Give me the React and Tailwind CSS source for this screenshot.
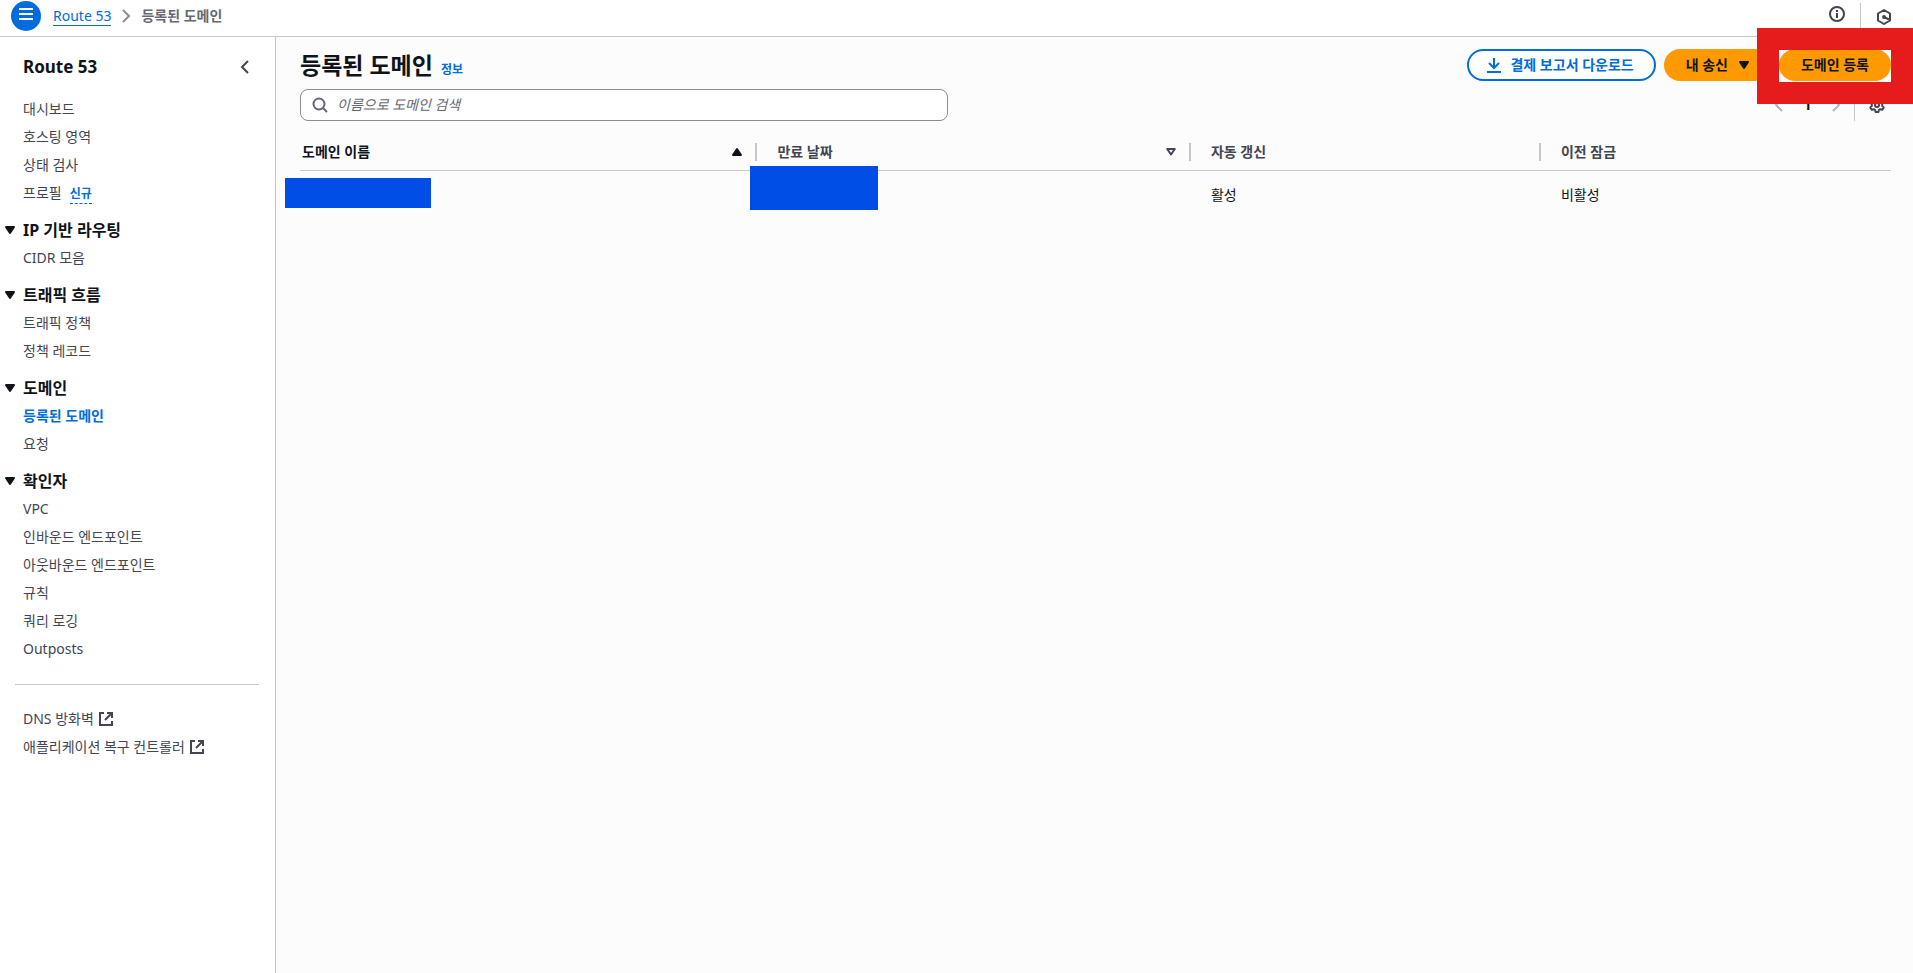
const groups = [
  {
    items: [
      { label: "대시보드" },
      { label: "호스팅 영역" },
      { label: "상태 검사" },
      { label: "프로필", badge: "신규" },
    ],
  },
  { title: "IP 기반 라우팅", items: [{ label: "CIDR 모음" }] },
  {
    title: "트래픽 흐름",
    items: [{ label: "트래픽 정책" }, { label: "정책 레코드" }],
  },
  {
    title: "도메인",
    items: [{ label: "등록된 도메인", active: true }, { label: "요청" }],
  },
  {
    title: "확인자",
    items: [
      { label: "VPC" },
      { label: "인바운드 엔드포인트" },
      { label: "아웃바운드 엔드포인트" },
      { label: "규칙" },
      { label: "쿼리 로깅" },
      { label: "Outposts" },
    ],
  },
];

const externalLinks = ["DNS 방화벽", "애플리케이션 복구 컨트롤러"];

function Icon({ children, className = "" }) {
  return (
    <svg
      viewBox="0 0 16 16"
      fill="none"
      stroke="currentColor"
      strokeWidth="2"
      aria-hidden="true"
      className={`size-4 shrink-0 ${className}`}
    >
      {children}
    </svg>
  );
}

function Caret({ up, outline }) {
  return (
    <Icon>
      {outline ? (
        <path d="M4.200 5h7.600L8 10.500z" strokeLinejoin="round" />
      ) : (
        <path
          d={up ? "M4 11h8L8 5z" : "M4 5h8l-4 6z"}
          fill="currentColor"
          strokeLinejoin="round"
        />
      )}
    </Icon>
  );
}

function Header() {
  return (
    <header className="flex h-[37px] items-start justify-between border-b border-[#c6c6cd] bg-white pr-[21px] pl-[11px]">
      <div className="flex items-center pt-px">
        <button
          type="button"
          aria-label="메뉴"
          className="flex size-[30px] items-center justify-center rounded-full bg-[#006ce0] pb-1 text-white"
        >
          <svg viewBox="0 0 14 12" className="h-3 w-3.5" stroke="currentColor" strokeWidth="2">
            <path d="M0 1h14M0 6h14M0 11h14" />
          </svg>
        </button>
        <nav aria-label="이동 경로" className="flex items-center pl-3">
          <a href="#" className="border-b border-[#006ce0] leading-[18px] text-[#006ce0]">
            Route 53
          </a>
          <Icon className="mx-[7px] text-[#8c8c94]">
            <path d="M5 2l6 6-6 6" />
          </Icon>
          <span className="font-bold text-[#656871]">등록된 도메인</span>
        </nav>
      </div>
      <div className="flex h-9 items-start text-[#424650]">
        <button type="button" aria-label="도움말" className="mt-1.5">
          <Icon>
            <circle cx="8" cy="8" r="7" />
            <path d="M8 7v5M8 4v2" />
          </Icon>
        </button>
        <span className="mt-[3px] mr-[15px] ml-[15px] h-8 w-px bg-[#c6c6cd]" />
        <button type="button" aria-label="Amazon Q" className="mt-[9px]">
          <Icon>
            <path d="M8 1l6 3.500v7L8 15l-6-3.500v-7z" strokeLinejoin="round" />
            <path d="M8 8l5 2.500" />
            <circle cx="8" cy="8" r="1" fill="currentColor" />
          </Icon>
        </button>
      </div>
    </header>
  );
}

function Sidebar() {
  return (
    <aside className="w-[276px] shrink-0 border-r border-[#c6c6cd] bg-white text-[#424650]">
      <div className="flex items-center justify-between pt-[18px] pr-[22px] pl-[23px]">
        <h2 className="text-[17px] leading-6 font-bold text-[#0f141a]">Route 53</h2>
        <button type="button" aria-label="탐색 닫기">
          <Icon>
            <path d="M11 2L5 8l6 6" />
          </Icon>
        </button>
      </div>
      <nav aria-label="Route 53" className="pt-4">
        {groups.map((group, i) => (
          <section key={i}>
            {group.title && (
              <h3 className="mt-[11px] mb-0.5">
                <button
                  type="button"
                  className="flex items-center gap-[5px] pl-0.5 text-base leading-6 font-bold text-[#0f141a]"
                >
                  <Caret />
                  {group.title}
                </button>
              </h3>
            )}
            <ul className="pl-[23px]">
              {group.items.map((item) => (
                <li key={item.label} className="flex h-7 items-center gap-2">
                  <a href="#" className={item.active ? "font-bold text-[#006ce0]" : ""}>
                    {item.label}
                  </a>
                  {item.badge && (
                    <button
                      type="button"
                      className="mt-0.5 border-b border-dashed border-[#006ce0] text-xs leading-[18px] font-bold text-[#006ce0]"
                    >
                      {item.badge}
                    </button>
                  )}
                </li>
              ))}
            </ul>
          </section>
        ))}
        <hr className="mt-[21px] mr-4 mb-5 ml-[15px] border-[#c6c6cd]" />
        <ul className="pl-[23px]">
          {externalLinks.map((label) => (
            <li key={label} className="flex h-7 items-center">
              <a href="#" className="flex items-center gap-1">
                {label}
                <Icon>
                  <path d="M6 2H2v12h12v-4" />
                  <path d="M9 2h5v5M14 2L7 9" />
                </Icon>
              </a>
            </li>
          ))}
        </ul>
      </nav>
    </aside>
  );
}

function PageHeader() {
  return (
    <div className="flex items-center justify-between">
      <div className="flex items-baseline gap-2">
        <h1 className="text-[23px] leading-[30px] font-bold">등록된 도메인</h1>
        <a href="#" className="text-xs font-bold text-[#006ce0]">
          정보
        </a>
      </div>
      <div className="flex gap-2 font-bold">
        <button
          type="button"
          className="flex h-8 items-center gap-2 rounded-full border-2 border-[#006ce0] bg-white pr-5 pl-[17px] text-[#006ce0]"
        >
          <Icon>
            <path d="M1 15h14M8 1v10M3 6l5 5 5-5" />
          </Icon>
          결제 보고서 다운로드
        </button>
        <button
          type="button"
          className="flex h-8 items-center gap-2 rounded-full bg-[#ff9900] pr-[19px] pl-[22px]"
        >
          내 송신
          <Caret />
        </button>
        <div className="relative z-10 bg-white">
          <button type="button" className="block h-8 rounded-full bg-[#ff9900] px-[22px]">
            도메인 등록
          </button>
          <span className="pointer-events-none absolute -inset-x-[22px] -top-[21px] -bottom-[23px] border-[22px] border-[#e61c1c]" />
        </div>
      </div>
    </div>
  );
}

function Toolbar() {
  return (
    <div className="mt-2 flex items-center justify-between">
      <label className="flex h-8 w-[40.7%] items-center gap-[9px] rounded-lg border border-[#8c8c94] bg-white px-[11px]">
        <Icon className="text-[#656871]">
          <circle cx="7" cy="7" r="5.5" />
          <path d="M11 11l4 4" />
        </Icon>
        <input
          type="search"
          aria-label="이름으로 도메인 검색"
          placeholder="이름으로 도메인 검색"
          className="w-full bg-transparent outline-none placeholder:text-[#656871] placeholder:italic"
        />
      </label>
      <div className="flex items-center">
        <button type="button" aria-label="이전 페이지" className="text-[#b4b4bb]">
          <Icon>
            <path d="M11 2L5 8l6 6" />
          </Icon>
        </button>
        <button type="button" className="w-[41px] font-bold">
          1
        </button>
        <button type="button" aria-label="다음 페이지" className="text-[#b4b4bb]">
          <Icon>
            <path d="M5 2l6 6-6 6" />
          </Icon>
        </button>
        <span className="mr-[14px] ml-2.5 h-8 w-px bg-[#c6c6cd]" />
        <button type="button" aria-label="설정" className="mr-1.5 text-[#424650]">
          <Icon>
            <path
              d="M6.6 1h2.8l.5 2 1.4.8 2-.6 1.4 2.4-1.500 1.500v1.800l1.500 1.500-1.400 2.400-2-.6-1.400.8-.5 2H6.600l-.5-2-1.400-.8-2 .6-1.400-2.400L2.800 8.900V7.100L1.300 5.600l1.400-2.400 2 .6L6.100 3z"
              strokeLinejoin="round"
            />
            <circle cx="8" cy="8" r="2" />
          </Icon>
        </button>
      </div>
    </div>
  );
}

function HeadCell({ label, sort, first, last }) {
  return (
    <th scope="col" className="border-b border-[#c6c6cd] p-0 font-bold">
      <div
        className={`flex h-[18px] items-center justify-between ${first ? "pl-0.5 text-[#0f141a]" : "pl-5"} ${
          last ? "" : "border-r-2 border-[#c6c6cd] pr-2.5"
        }`}
      >
        {label}
        {sort && (
          <button type="button" aria-label={`${label} 정렬`}>
            <Caret up={sort === "asc"} outline={sort === "none"} />
          </button>
        )}
      </div>
    </th>
  );
}

function DomainTable() {
  return (
    <table className="mt-3 w-full table-fixed border-separate border-spacing-0 text-left">
      <colgroup>
        <col className="w-[28.75%]" />
        <col className="w-[27.25%]" />
        <col className="w-[22%]" />
        <col />
      </colgroup>
      <thead className="text-[#424650]">
        <tr className="h-[38px]">
          <HeadCell label="도메인 이름" sort="asc" first />
          <HeadCell label="만료 날짜" sort="none" />
          <HeadCell label="자동 갱신" />
          <HeadCell label="이전 잠금" last />
        </tr>
      </thead>
      <tbody>
        <tr className="h-[47px]">
          <td className="relative p-0">
            <span className="absolute top-[7px] -left-[15px] h-[30px] w-[146px] bg-[#004ee6]" />
          </td>
          <td className="relative p-0">
            <span className="absolute -top-[5px] -left-[7px] h-11 w-32 bg-[#004ee6]" />
          </td>
          <td className="p-0 pl-5">활성</td>
          <td className="p-0 pl-5">비활성</td>
        </tr>
      </tbody>
    </table>
  );
}

export default function App() {
  return (
    <div className="flex min-h-screen flex-col bg-[#fcfcfc] font-['Noto_Sans','Noto_Sans_CJK_KR',sans-serif] text-sm text-[#0f141a]">
      <Header />
      <div className="flex flex-1">
        <Sidebar />
        <main className="min-w-0 flex-1 pt-3 pr-[22px] pl-6">
          <PageHeader />
          <Toolbar />
          <DomainTable />
        </main>
      </div>
    </div>
  );
}
